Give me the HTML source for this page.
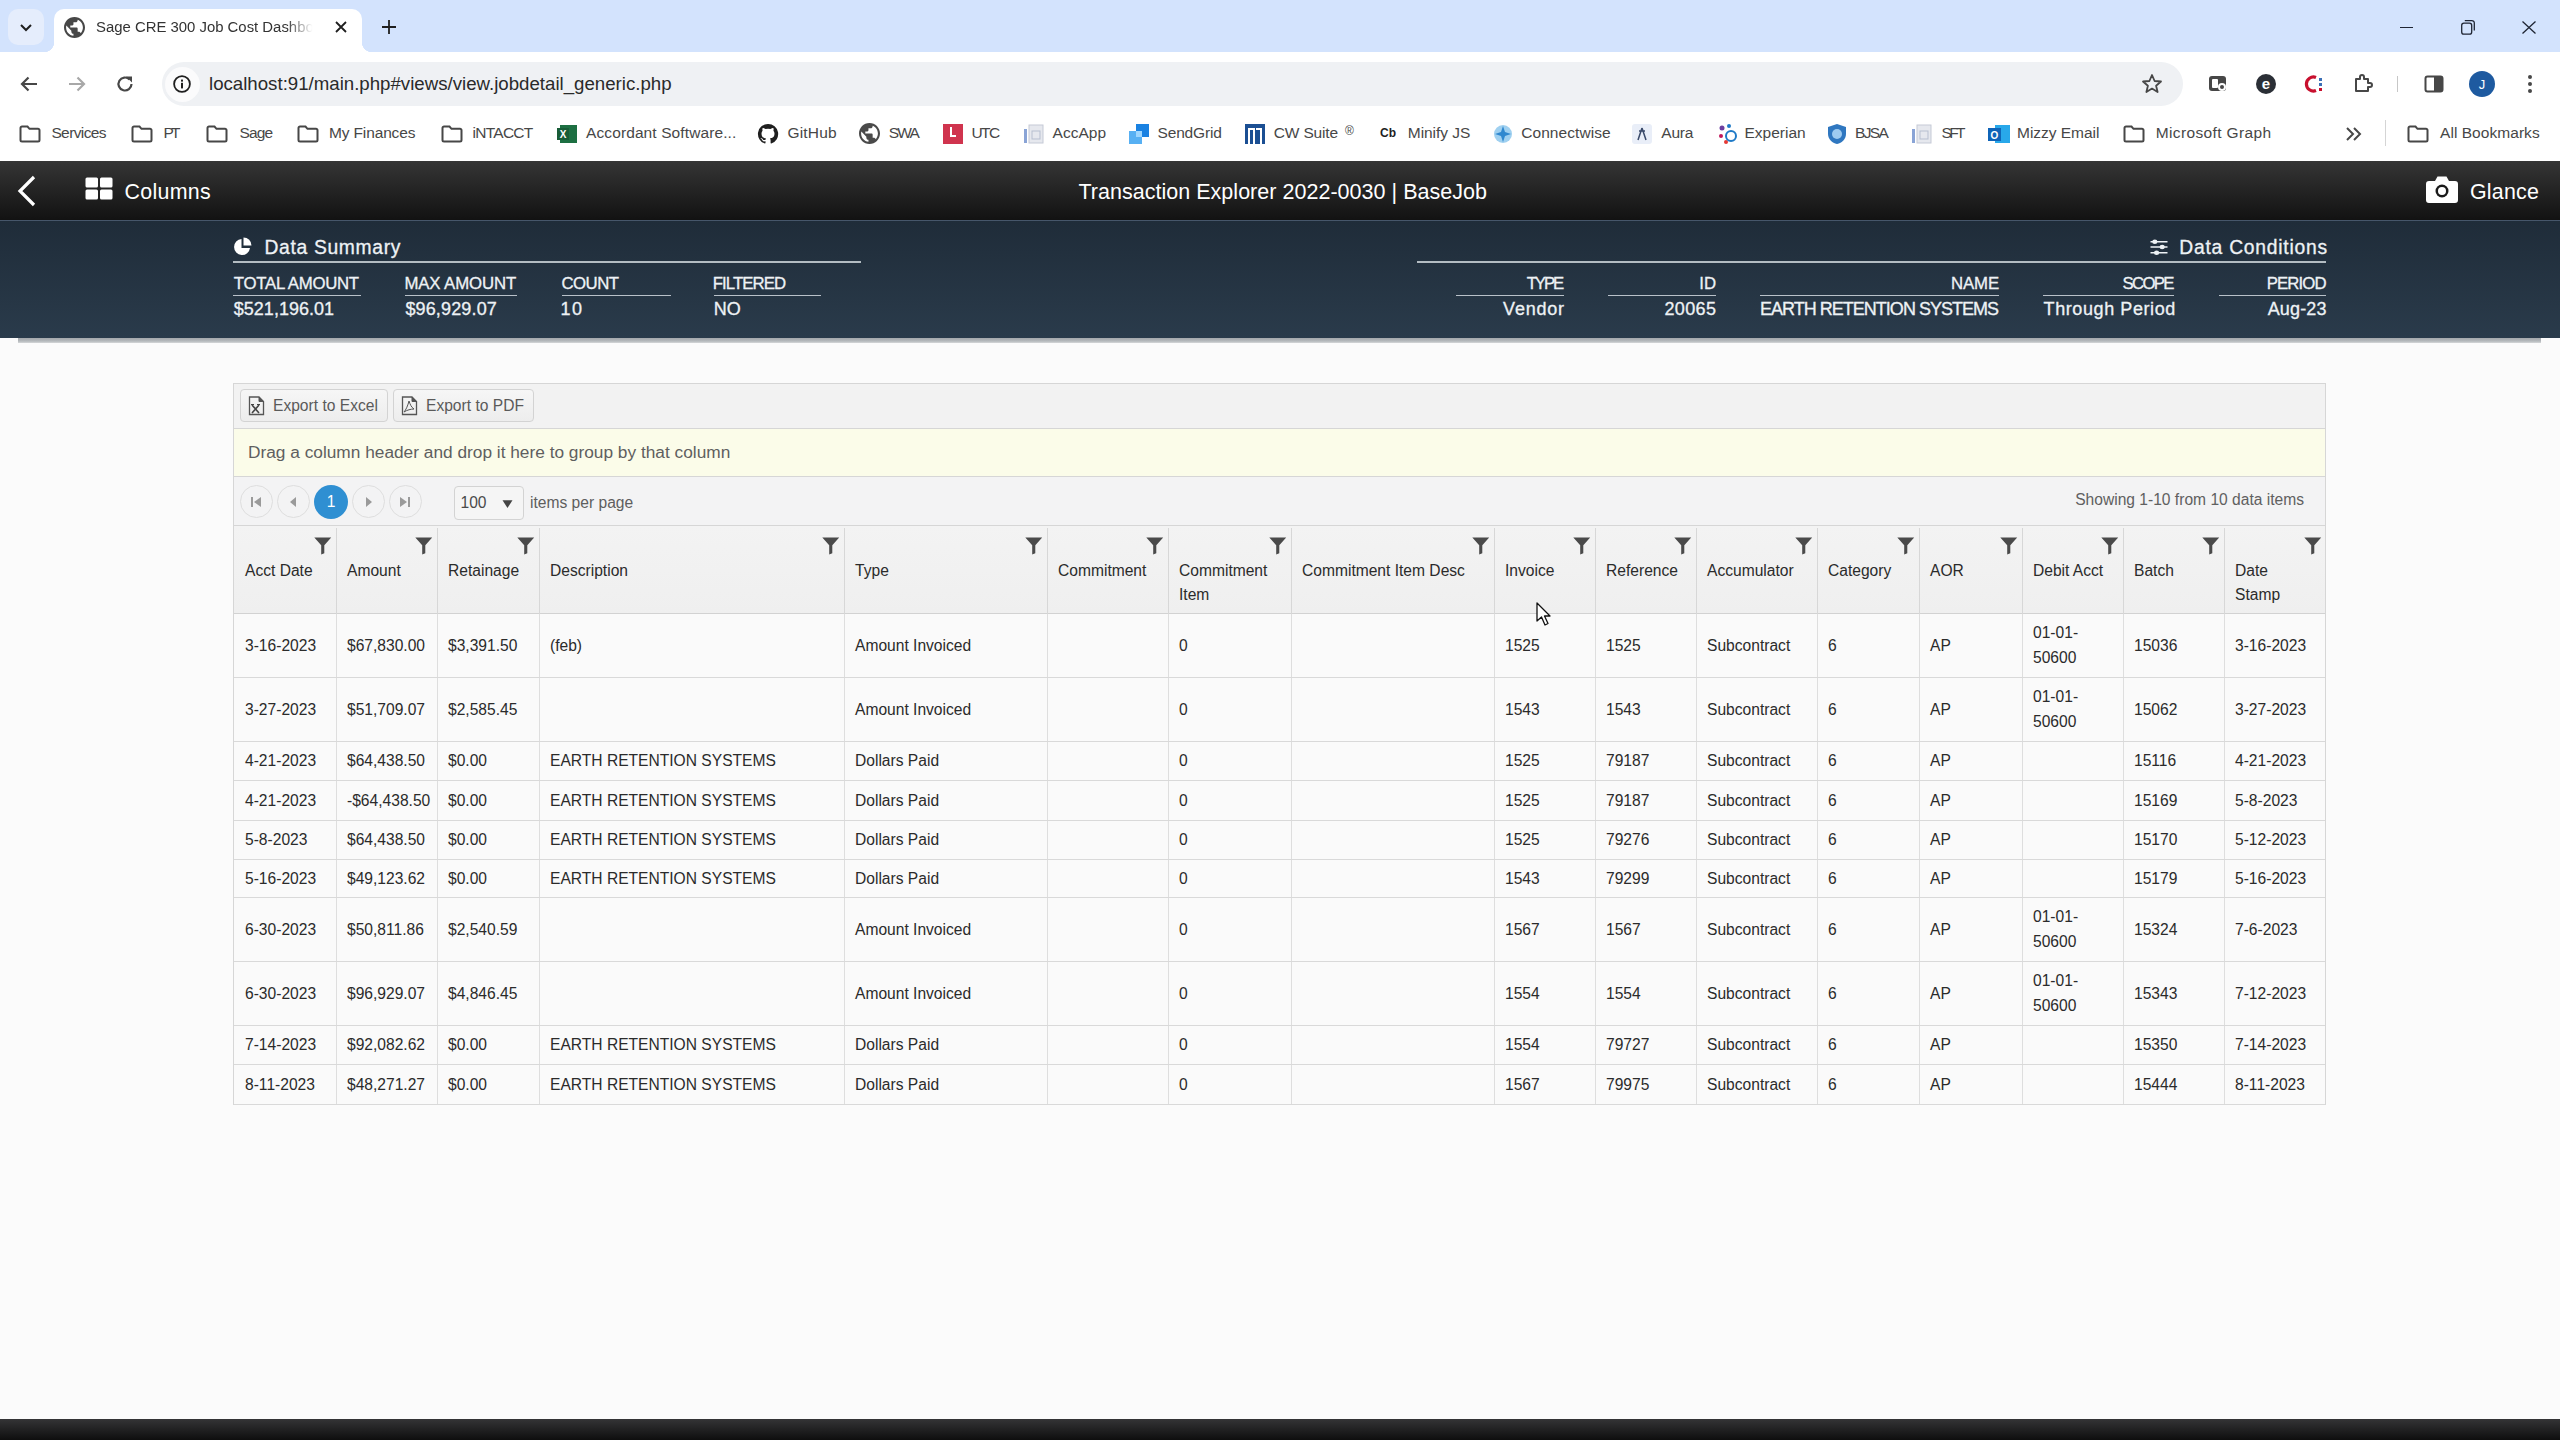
<!DOCTYPE html><html><head><meta charset="utf-8"><style>*{margin:0;padding:0;box-sizing:border-box}html,body{width:2560px;height:1440px;overflow:hidden;background:#fbfbfb;font-family:"Liberation Sans",sans-serif;position:relative}</style></head><body>
<div style="position:absolute;left:0px;top:0px;width:2560px;height:52px;background:#d3e3fd"></div>
<div style="position:absolute;left:8px;top:9px;width:36px;height:36px;background:#e5edfc;border-radius:10px"></div>
<svg style="position:absolute;left:18px;top:19px" width="16" height="16" viewBox="0 0 16 16"><path d="M3 6 L8 11 L13 6" fill="none" stroke="#1f1f1f" stroke-width="2"/></svg>
<div style="position:absolute;left:54px;top:9px;width:308px;height:43px;background:#fff;border-radius:10px 10px 0 0"></div>
<div style="position:absolute;left:44px;top:42px;width:10px;height:10px;background:radial-gradient(circle at 0 0,#d3e3fd 10px,#fff 10.5px)"></div>
<div style="position:absolute;left:362px;top:42px;width:10px;height:10px;background:radial-gradient(circle at 100% 0,#d3e3fd 10px,#fff 10.5px)"></div>
<svg style="position:absolute;left:64px;top:17px" width="21" height="21" viewBox="2 2 20 20"><path d="M12 2C6.48 2 2 6.48 2 12s4.48 10 10 10 10-4.48 10-10S17.52 2 12 2zm-1 17.93c-3.95-.49-7-3.85-7-7.93 0-.62.08-1.21.21-1.79L9 15v1c0 1.1.9 2 2 2v1.93zm6.9-2.54c-.26-.81-1-1.39-1.9-1.39h-1v-3c0-.55-.45-1-1-1H8v-2h2c.55 0 1-.45 1-1V7h2c1.1 0 2-.9 2-2v-.41c2.93 1.19 5 4.06 5 7.41 0 2.080-.8 3.97-2.1 5.39z" fill="#474747"/></svg>
<div style="position:absolute;left:96px;top:17px;width:221px;height:22px;overflow:hidden;font-size:14.9px;line-height:20px;color:#333;white-space:pre;-webkit-mask-image:linear-gradient(90deg,#000 86%,transparent 98%)">Sage CRE 300 Job Cost Dashboard</div>
<svg style="position:absolute;left:334px;top:20px" width="14" height="14" viewBox="0 0 14 14"><path d="M2 2 L12 12 M12 2 L2 12" stroke="#1f1f1f" stroke-width="1.8"/></svg>
<svg style="position:absolute;left:381px;top:19px" width="16" height="16" viewBox="0 0 16 16"><path d="M8 1 V15 M1 8 H15" stroke="#1f1f1f" stroke-width="1.8"/></svg>
<div style="position:absolute;left:2400px;top:26.6px;width:13px;height:1.3px;background:#1f2533"></div>
<svg style="position:absolute;left:2459px;top:18px" width="18" height="18" viewBox="0 0 18 18"><rect x="2.7" y="5.2" width="10" height="11" rx="2.2" fill="none" stroke="#1f2533" stroke-width="1.3"/><path d="M5.8 2.6 H12.8 A2.5 2.5 0 0 1 15.3 5.1 V12.5" fill="none" stroke="#1f2533" stroke-width="1.3"/></svg>
<svg style="position:absolute;left:2521px;top:20px" width="16" height="15" viewBox="0 0 16 15"><path d="M1.5 1.5 L14.5 13.5 M14.5 1.5 L1.5 13.5" stroke="#1f2533" stroke-width="1.3"/></svg>
<div style="position:absolute;left:0px;top:52px;width:2560px;height:56px;background:#fff"></div>
<svg style="position:absolute;left:19px;top:74px" width="20" height="20" viewBox="0 0 20 20"><path d="M18 10 H3 M9.5 3.5 L3 10 L9.5 16.5" fill="none" stroke="#474747" stroke-width="2.2"/></svg>
<svg style="position:absolute;left:67px;top:74px" width="20" height="20" viewBox="0 0 20 20"><path d="M2 10 H17 M10.5 3.5 L17 10 L10.5 16.5" fill="none" stroke="#a8a8a8" stroke-width="2.2"/></svg>
<svg style="position:absolute;left:115px;top:74px" width="20" height="20" viewBox="0 0 20 20"><path d="M16.5 10 A6.5 6.5 0 1 1 14.6 5.4" fill="none" stroke="#474747" stroke-width="2.2"/><path d="M11 2.5 H17 V8.5 Z" fill="#474747"/></svg>
<div style="position:absolute;left:162px;top:62px;width:2021px;height:44px;background:#eff1f4;border-radius:22px"></div>
<div style="position:absolute;left:165px;top:67px;width:35px;height:35px;background:#fbfbfc;border-radius:50%"></div>
<svg style="position:absolute;left:173px;top:75px" width="18" height="18" viewBox="0 0 18 18"><circle cx="9" cy="9" r="7.9" fill="none" stroke="#1f1f1f" stroke-width="1.8"/><rect x="8" y="7.8" width="2" height="5.6" fill="#1f1f1f"/><rect x="8" y="4.6" width="2" height="2" fill="#1f1f1f"/></svg>
<div style="position:absolute;top:75.20px;font-size:18.66px;line-height:18.66px;color:#2a2a2a;font-weight:normal;white-space:pre;font-family:'Liberation Sans',sans-serif;left:209px;">localhost:91/main.php#views/view.jobdetail_generic.php</div>
<svg style="position:absolute;left:2141px;top:73px" width="22" height="22" viewBox="0 0 22 22"><path d="M11 2 L13.6 8 L20 8.5 L15.1 12.7 L16.6 19 L11 15.6 L5.4 19 L6.9 12.7 L2 8.5 L8.4 8 Z" fill="none" stroke="#474747" stroke-width="1.8" stroke-linejoin="round"/></svg>
<svg style="position:absolute;left:2207px;top:73px" width="22" height="22" viewBox="0 0 22 22"><rect x="2" y="3" width="17" height="15" rx="3" fill="#474747"/><rect x="5" y="6" width="6" height="9" rx="1" fill="#fff"/><circle cx="15" cy="14" r="4" fill="#fff"/><circle cx="15" cy="14" r="2" fill="#474747"/></svg>
<svg style="position:absolute;left:2255px;top:73px" width="22" height="22" viewBox="0 0 22 22"><circle cx="11" cy="11" r="10" fill="#2b2f36"/><text x="11" y="16" font-size="15" font-weight="bold" text-anchor="middle" fill="#fff" font-family="Liberation Sans">e</text></svg>
<svg style="position:absolute;left:2303px;top:73px" width="24" height="22" viewBox="0 0 24 22"><path d="M13 4.5 A7 7 0 1 0 13 17.5" fill="none" stroke="#c8102e" stroke-width="3.2"/><rect x="16" y="5" width="3" height="3" fill="#3b6fb6"/><rect x="16" y="10" width="3" height="3" fill="#3b6fb6"/><rect x="16" y="15" width="3" height="3" fill="#c8102e"/></svg>
<svg style="position:absolute;left:2352px;top:73px" width="22" height="22" viewBox="0 0 22 22"><path d="M4 6 H8 V4 A2 2 0 0 1 12 4 V6 H16 V10 H18 A2 2 0 0 1 18 14 H16 V18 H4 Z" fill="none" stroke="#474747" stroke-width="2" stroke-linejoin="round"/></svg>
<div style="position:absolute;left:2397px;top:76px;width:1px;height:16px;background:#c7c7c7"></div>
<svg style="position:absolute;left:2423px;top:73px" width="22" height="22" viewBox="0 0 22 22"><rect x="2.5" y="3.5" width="17" height="15" rx="2" fill="none" stroke="#474747" stroke-width="2"/><rect x="11" y="4" width="8" height="14" fill="#474747"/></svg>
<svg style="position:absolute;left:2469px;top:71px" width="26" height="26" viewBox="0 0 26 26"><circle cx="13" cy="13" r="13" fill="#1e5aa0"/><text x="13" y="18" font-size="13" text-anchor="middle" fill="#fff" font-family="Liberation Sans">J</text></svg>
<svg style="position:absolute;left:2526px;top:74px" width="8" height="20" viewBox="0 0 8 20"><circle cx="4" cy="3" r="2" fill="#474747"/><circle cx="4" cy="10" r="2" fill="#474747"/><circle cx="4" cy="17" r="2" fill="#474747"/></svg>
<div style="position:absolute;left:0px;top:108px;width:2560px;height:53px;background:#fff"></div>
<svg style="position:absolute;left:19px;top:125px" width="22" height="18" viewBox="0 0 22 18"><path d="M1.5 3 A1.5 1.5 0 0 1 3 1.5 H8.5 L10.5 3.8 H19 A1.5 1.5 0 0 1 20.5 5.3 V15 A1.5 1.5 0 0 1 19 16.5 H3 A1.5 1.5 0 0 1 1.5 15 Z" fill="none" stroke="#474747" stroke-width="2"/></svg>
<div style="position:absolute;top:125.48px;font-size:15.5px;line-height:15.5px;color:#474747;font-weight:normal;white-space:pre;font-family:'Liberation Sans',sans-serif;letter-spacing:-0.612px;left:51.4px;">Services</div>
<svg style="position:absolute;left:131px;top:125px" width="22" height="18" viewBox="0 0 22 18"><path d="M1.5 3 A1.5 1.5 0 0 1 3 1.5 H8.5 L10.5 3.8 H19 A1.5 1.5 0 0 1 20.5 5.3 V15 A1.5 1.5 0 0 1 19 16.5 H3 A1.5 1.5 0 0 1 1.5 15 Z" fill="none" stroke="#474747" stroke-width="2"/></svg>
<div style="position:absolute;top:125.48px;font-size:15.5px;line-height:15.5px;color:#474747;font-weight:normal;white-space:pre;font-family:'Liberation Sans',sans-serif;letter-spacing:-2.838px;left:163.5px;">PT</div>
<svg style="position:absolute;left:206px;top:125px" width="22" height="18" viewBox="0 0 22 18"><path d="M1.5 3 A1.5 1.5 0 0 1 3 1.5 H8.5 L10.5 3.8 H19 A1.5 1.5 0 0 1 20.5 5.3 V15 A1.5 1.5 0 0 1 19 16.5 H3 A1.5 1.5 0 0 1 1.5 15 Z" fill="none" stroke="#474747" stroke-width="2"/></svg>
<div style="position:absolute;top:125.48px;font-size:15.5px;line-height:15.5px;color:#474747;font-weight:normal;white-space:pre;font-family:'Liberation Sans',sans-serif;letter-spacing:-0.893px;left:239.5px;">Sage</div>
<svg style="position:absolute;left:297px;top:125px" width="22" height="18" viewBox="0 0 22 18"><path d="M1.5 3 A1.5 1.5 0 0 1 3 1.5 H8.5 L10.5 3.8 H19 A1.5 1.5 0 0 1 20.5 5.3 V15 A1.5 1.5 0 0 1 19 16.5 H3 A1.5 1.5 0 0 1 1.5 15 Z" fill="none" stroke="#474747" stroke-width="2"/></svg>
<div style="position:absolute;top:125.48px;font-size:15.5px;line-height:15.5px;color:#474747;font-weight:normal;white-space:pre;font-family:'Liberation Sans',sans-serif;letter-spacing:-0.141px;left:329px;">My Finances</div>
<svg style="position:absolute;left:441px;top:125px" width="22" height="18" viewBox="0 0 22 18"><path d="M1.5 3 A1.5 1.5 0 0 1 3 1.5 H8.5 L10.5 3.8 H19 A1.5 1.5 0 0 1 20.5 5.3 V15 A1.5 1.5 0 0 1 19 16.5 H3 A1.5 1.5 0 0 1 1.5 15 Z" fill="none" stroke="#474747" stroke-width="2"/></svg>
<div style="position:absolute;top:125.48px;font-size:15.5px;line-height:15.5px;color:#474747;font-weight:normal;white-space:pre;font-family:'Liberation Sans',sans-serif;letter-spacing:-0.747px;left:472.6px;">iNTACCT</div>
<svg style="position:absolute;left:556px;top:124px" width="22" height="20" viewBox="0 0 22 20"><rect x="4" y="1" width="17" height="18" fill="#1d6f42"/><rect x="1" y="4" width="12" height="12" fill="#185c37"/><text x="7" y="14" font-size="10" text-anchor="middle" fill="#fff" font-weight="bold" font-family="Liberation Sans">X</text></svg>
<div style="position:absolute;top:125.48px;font-size:15.5px;line-height:15.5px;color:#474747;font-weight:normal;white-space:pre;font-family:'Liberation Sans',sans-serif;letter-spacing:0.106px;left:586px;">Accordant Software...</div>
<svg style="position:absolute;left:757px;top:123px" width="22" height="22" viewBox="0 0 22 22"><path d="M11 1 A10 10 0 0 0 7.8 20.5 C8.3 20.6 8.5 20.3 8.5 20 V18.3 C5.7 18.9 5.1 17 5.1 17 C4.6 15.8 3.9 15.5 3.9 15.5 C3 14.9 4 14.9 4 14.9 C5 15 5.5 15.9 5.5 15.9 C6.4 17.5 7.9 17 8.5 16.8 C8.6 16.1 8.9 15.7 9.1 15.5 C6.9 15.2 4.5 14.4 4.5 10.5 C4.5 9.4 4.9 8.5 5.6 7.8 C5.5 7.5 5.1 6.5 5.7 5.1 C5.7 5.1 6.6 4.8 8.5 6.1 A9.6 9.6 0 0 1 13.5 6.1 C15.4 4.8 16.3 5.1 16.3 5.1 C16.9 6.5 16.5 7.5 16.4 7.8 C17.1 8.5 17.5 9.4 17.5 10.5 C17.5 14.4 15.1 15.2 12.9 15.5 C13.3 15.8 13.6 16.4 13.6 17.3 V20 C13.6 20.3 13.8 20.6 14.3 20.5 A10 10 0 0 0 11 1 Z" fill="#1f1f1f"/></svg>
<div style="position:absolute;top:125.48px;font-size:15.5px;line-height:15.5px;color:#474747;font-weight:normal;white-space:pre;font-family:'Liberation Sans',sans-serif;letter-spacing:0.176px;left:787.5px;">GitHub</div>
<svg style="position:absolute;left:859px;top:123px" width="21" height="21" viewBox="2 2 20 20"><path d="M12 2C6.48 2 2 6.48 2 12s4.48 10 10 10 10-4.48 10-10S17.52 2 12 2zm-1 17.930c-3.95-.49-7-3.85-7-7.93 0-.62.08-1.21.21-1.79L9 15v1c0 1.1.9 2 2 2v1.93zm6.9-2.54c-.26-.81-1-1.39-1.9-1.39h-1v-3c0-.55-.45-1-1-1H8v-2h2c.55 0 1-.45 1-1V7h2c1.1 0 2-.9 2-2v-.41c2.93 1.19 5 4.06 5 7.41 0 2.08-.8 3.97-2.1 5.39z" fill="#4a4a4a"/></svg>
<div style="position:absolute;top:125.48px;font-size:15.5px;line-height:15.5px;color:#474747;font-weight:normal;white-space:pre;font-family:'Liberation Sans',sans-serif;letter-spacing:-1.821px;left:888.75px;">SWA</div>
<svg style="position:absolute;left:942px;top:123px" width="22" height="22" viewBox="0 0 22 22"><rect x="1" y="1" width="20" height="20" fill="#d0344e"/><path d="M9 4 V13 H14" fill="none" stroke="#fff" stroke-width="2"/></svg>
<div style="position:absolute;top:125.48px;font-size:15.5px;line-height:15.5px;color:#474747;font-weight:normal;white-space:pre;font-family:'Liberation Sans',sans-serif;letter-spacing:-1.581px;left:971.5px;">UTC</div>
<svg style="position:absolute;left:1023px;top:123px" width="22" height="22" viewBox="0 0 22 22"><rect x="6" y="2" width="14" height="18" fill="#e6e8ee" stroke="#c5cad6"/><rect x="1" y="6" width="3" height="14" fill="#8aa4d6"/><rect x="9" y="8" width="8" height="8" fill="none" stroke="#b7bfd0"/></svg>
<div style="position:absolute;top:125.48px;font-size:15.5px;line-height:15.5px;color:#474747;font-weight:normal;white-space:pre;font-family:'Liberation Sans',sans-serif;letter-spacing:0.041px;left:1052.5px;">AccApp</div>
<svg style="position:absolute;left:1128px;top:123px" width="22" height="22" viewBox="0 0 22 22"><rect x="8" y="1" width="13" height="13" fill="#1a82e2"/><rect x="1" y="8" width="13" height="13" fill="#57b0f3"/><rect x="8" y="8" width="6" height="6" fill="#9dd6ff"/></svg>
<div style="position:absolute;top:125.48px;font-size:15.5px;line-height:15.5px;color:#474747;font-weight:normal;white-space:pre;font-family:'Liberation Sans',sans-serif;letter-spacing:-0.159px;left:1157.5px;">SendGrid</div>
<svg style="position:absolute;left:1244px;top:123px" width="22" height="22" viewBox="0 0 22 22"><rect x="1" y="1" width="20" height="20" fill="#1b4f93"/><path d="M5 21 V6 H10 V21 M12 6 H17 V21" fill="none" stroke="#fff" stroke-width="2"/></svg>
<div style="position:absolute;top:125.48px;font-size:15.5px;line-height:15.5px;color:#474747;font-weight:normal;white-space:pre;font-family:'Liberation Sans',sans-serif;letter-spacing:-0.155px;left:1273.75px;">CW Suite</div>
<div style="position:absolute;top:125.44px;font-size:12px;line-height:12px;color:#474747;font-weight:normal;white-space:pre;font-family:'Liberation Sans',sans-serif;left:1345px;">®</div>
<div style="position:absolute;top:127.44px;font-size:12px;line-height:12px;color:#1f1f1f;font-weight:bold;white-space:pre;font-family:'Liberation Sans',sans-serif;left:1380px;">Cb</div>
<div style="position:absolute;top:125.48px;font-size:15.5px;line-height:15.5px;color:#474747;font-weight:normal;white-space:pre;font-family:'Liberation Sans',sans-serif;letter-spacing:-0.035px;left:1407.75px;">Minify JS</div>
<svg style="position:absolute;left:1493px;top:124px" width="20" height="20" viewBox="0 0 20 20"><circle cx="10" cy="10" r="9" fill="#9fd0f0"/><path d="M10 2 L12 8 L18 10 L12 12 L10 18 L8 12 L2 10 L8 8 Z" fill="#2f88cf"/></svg>
<div style="position:absolute;top:125.48px;font-size:15.5px;line-height:15.5px;color:#474747;font-weight:normal;white-space:pre;font-family:'Liberation Sans',sans-serif;letter-spacing:0.063px;left:1521.25px;">Connectwise</div>
<svg style="position:absolute;left:1631px;top:123px" width="22" height="22" viewBox="0 0 22 22"><rect x="1" y="1" width="20" height="20" rx="3" fill="#e9eef8"/><path d="M11 5 L7 17 M11 5 L15 17 M8 8 H14" fill="none" stroke="#3a4a6a" stroke-width="1.5"/></svg>
<div style="position:absolute;top:125.48px;font-size:15.5px;line-height:15.5px;color:#474747;font-weight:normal;white-space:pre;font-family:'Liberation Sans',sans-serif;letter-spacing:-0.207px;left:1661.25px;">Aura</div>
<svg style="position:absolute;left:1717px;top:123px" width="22" height="22" viewBox="0 0 22 22"><circle cx="5" cy="5" r="2.5" fill="#6d3fa0"/><circle cx="12" cy="3" r="2" fill="#1f7ac7"/><circle cx="4" cy="13" r="2" fill="#c2185b"/><circle cx="9" cy="19" r="2" fill="#e53935"/><circle cx="14" cy="13" r="5" fill="#fff" stroke="#1f7ac7" stroke-width="2"/></svg>
<div style="position:absolute;top:125.48px;font-size:15.5px;line-height:15.5px;color:#474747;font-weight:normal;white-space:pre;font-family:'Liberation Sans',sans-serif;letter-spacing:-0.008px;left:1744.5px;">Experian</div>
<svg style="position:absolute;left:1826px;top:123px" width="22" height="22" viewBox="0 0 22 22"><path d="M11 1 L20 4 V11 C20 16 16 20 11 21 C6 20 2 16 2 11 V4 Z" fill="#2f77c0"/><circle cx="11" cy="11" r="5" fill="#9ecbf0"/></svg>
<div style="position:absolute;top:125.48px;font-size:15.5px;line-height:15.5px;color:#474747;font-weight:normal;white-space:pre;font-family:'Liberation Sans',sans-serif;letter-spacing:-1.676px;left:1855px;">BJSA</div>
<svg style="position:absolute;left:1911px;top:123px" width="22" height="22" viewBox="0 0 22 22"><rect x="6" y="2" width="14" height="18" fill="#e6e8ee" stroke="#c5cad6"/><rect x="1" y="6" width="3" height="14" fill="#8aa4d6"/><rect x="9" y="8" width="8" height="8" fill="none" stroke="#b7bfd0"/></svg>
<div style="position:absolute;top:125.48px;font-size:15.5px;line-height:15.5px;color:#474747;font-weight:normal;white-space:pre;font-family:'Liberation Sans',sans-serif;letter-spacing:-2.603px;left:1941.4px;">SFT</div>
<svg style="position:absolute;left:1987px;top:122px" width="24" height="24" viewBox="0 0 24 24"><rect x="8" y="3" width="15" height="18" fill="#28a8ea"/><rect x="1" y="6" width="13" height="13" fill="#0f64b8"/><text x="7.5" y="16.5" font-size="10" text-anchor="middle" fill="#fff" font-weight="bold" font-family="Liberation Sans">O</text></svg>
<div style="position:absolute;top:125.48px;font-size:15.5px;line-height:15.5px;color:#474747;font-weight:normal;white-space:pre;font-family:'Liberation Sans',sans-serif;letter-spacing:-0.023px;left:2017px;">Mizzy Email</div>
<svg style="position:absolute;left:2123px;top:125px" width="22" height="18" viewBox="0 0 22 18"><path d="M1.5 3 A1.5 1.5 0 0 1 3 1.5 H8.5 L10.5 3.8 H19 A1.5 1.5 0 0 1 20.5 5.3 V15 A1.5 1.5 0 0 1 19 16.5 H3 A1.5 1.5 0 0 1 1.5 15 Z" fill="none" stroke="#474747" stroke-width="2"/></svg>
<div style="position:absolute;top:125.48px;font-size:15.5px;line-height:15.5px;color:#474747;font-weight:normal;white-space:pre;font-family:'Liberation Sans',sans-serif;letter-spacing:0.355px;left:2155.8px;">Microsoft Graph</div>
<svg style="position:absolute;left:2345px;top:126px" width="18" height="16" viewBox="0 0 18 16"><path d="M2 2 L8 8 L2 14 M9 2 L15 8 L9 14" fill="none" stroke="#474747" stroke-width="2"/></svg>
<div style="position:absolute;left:2385px;top:120px;width:1px;height:26px;background:#d5d5d5"></div>
<svg style="position:absolute;left:2407px;top:125px" width="22" height="18" viewBox="0 0 22 18"><path d="M1.5 3 A1.5 1.5 0 0 1 3 1.5 H8.5 L10.5 3.8 H19 A1.5 1.5 0 0 1 20.5 5.3 V15 A1.5 1.5 0 0 1 19 16.5 H3 A1.5 1.5 0 0 1 1.5 15 Z" fill="none" stroke="#474747" stroke-width="2"/></svg>
<div style="position:absolute;top:125.48px;font-size:15.5px;line-height:15.5px;color:#474747;font-weight:normal;white-space:pre;font-family:'Liberation Sans',sans-serif;letter-spacing:0.05px;left:2440px;">All Bookmarks</div>
<div style="position:absolute;left:0px;top:161px;width:2560px;height:59px;background:linear-gradient(#353535,#121212)"></div>
<svg style="position:absolute;left:15px;top:174px" width="24" height="34" viewBox="0 0 24 34"><path d="M19 3 L5 17 L19 31" fill="none" stroke="#fff" stroke-width="3.2"/></svg>
<svg style="position:absolute;left:85px;top:177px" width="28" height="23" viewBox="0 0 28 23"><rect x="0.5" y="0.5" width="12.5" height="10" rx="1.5" fill="#fff"/><rect x="15" y="0.5" width="12.5" height="10" rx="1.5" fill="#fff"/><rect x="0.5" y="12.5" width="12.5" height="10" rx="1.5" fill="#fff"/><rect x="15" y="12.5" width="12.5" height="10" rx="1.5" fill="#fff"/></svg>
<div style="position:absolute;top:181.88px;font-size:21.4px;line-height:21.4px;color:#fff;font-weight:normal;white-space:pre;font-family:'Liberation Sans',sans-serif;letter-spacing:0.299px;left:124.5px;">Columns</div>
<div style="position:absolute;top:181.60px;font-size:21.5px;line-height:21.5px;color:#fff;font-weight:normal;white-space:pre;font-family:'Liberation Sans',sans-serif;letter-spacing:0.026px;left:1078.4px;">Transaction Explorer 2022-0030 | BaseJob</div>
<svg style="position:absolute;left:2426px;top:174px" width="32" height="29" viewBox="0 0 32 29"><path d="M3 7 H9 L11.5 2.5 H20.5 L23 7 H29 A3 3 0 0 1 32 10 V26 A3 3 0 0 1 29 29 H3 A3 3 0 0 1 0 26 V10 A3 3 0 0 1 3 7 Z" fill="#fff"/><circle cx="16" cy="17" r="6.5" fill="#1a1a1a"/><circle cx="16" cy="17" r="4" fill="#fff"/></svg>
<div style="position:absolute;top:181.88px;font-size:21.4px;line-height:21.4px;color:#fff;font-weight:normal;white-space:pre;font-family:'Liberation Sans',sans-serif;letter-spacing:0.224px;left:2470px;">Glance</div>
<div style="position:absolute;left:0px;top:220px;width:2560px;height:118px;background:linear-gradient(#1f2c39,#2a3b4b);border-top:1px solid #46566a"></div>
<div style="position:absolute;left:18px;top:338px;width:2523px;height:6px;background:linear-gradient(#a4a8ac,#b4b8bb 50%,#e6e7e8)"></div>
<svg style="position:absolute;left:233px;top:237px" width="19" height="19" viewBox="0 0 19 19"><path d="M8.5 2 A8 8 0 1 0 17 11 H8.5 Z" fill="#fff"/><path d="M10.5 0.5 A8 8 0 0 1 18.5 8.5 H10.5 Z" fill="#fff"/></svg>
<div style="position:absolute;top:238.06px;font-size:19.3px;line-height:19.3px;color:#eef2f5;font-weight:normal;white-space:pre;font-family:'Liberation Sans',sans-serif;letter-spacing:0.669px;left:264.5px;-webkit-text-stroke:0.3px #eef2f5;">Data Summary</div>
<div style="position:absolute;left:233px;top:261.3px;width:628px;height:1.4px;background:#b3bcc2"></div>
<div style="position:absolute;top:275.78px;font-size:16.8px;line-height:16.8px;color:#eef2f5;font-weight:normal;white-space:pre;font-family:'Liberation Sans',sans-serif;letter-spacing:-0.278px;left:233.8px;-webkit-text-stroke:0.3px #eef2f5;">TOTAL AMOUNT</div>
<div style="position:absolute;left:233px;top:294.5px;width:128px;height:1.5px;background:#b9c1c9"></div>
<div style="position:absolute;top:300.36px;font-size:18px;line-height:18px;color:#eef2f5;font-weight:normal;white-space:pre;font-family:'Liberation Sans',sans-serif;letter-spacing:0.011px;left:233.8px;-webkit-text-stroke:0.3px #eef2f5;">$521,196.01</div>
<div style="position:absolute;top:275.78px;font-size:16.8px;line-height:16.8px;color:#eef2f5;font-weight:normal;white-space:pre;font-family:'Liberation Sans',sans-serif;letter-spacing:-0.11px;left:404.4px;-webkit-text-stroke:0.3px #eef2f5;">MAX AMOUNT</div>
<div style="position:absolute;left:405px;top:294.5px;width:112px;height:1.5px;background:#b9c1c9"></div>
<div style="position:absolute;top:300.36px;font-size:18px;line-height:18px;color:#eef2f5;font-weight:normal;white-space:pre;font-family:'Liberation Sans',sans-serif;letter-spacing:0.147px;left:405.4px;-webkit-text-stroke:0.3px #eef2f5;">$96,929.07</div>
<div style="position:absolute;top:275.78px;font-size:16.8px;line-height:16.8px;color:#eef2f5;font-weight:normal;white-space:pre;font-family:'Liberation Sans',sans-serif;letter-spacing:-0.527px;left:561.5px;-webkit-text-stroke:0.3px #eef2f5;">COUNT</div>
<div style="position:absolute;left:562px;top:294.5px;width:109px;height:1.5px;background:#b9c1c9"></div>
<div style="position:absolute;top:300.36px;font-size:18px;line-height:18px;color:#eef2f5;font-weight:normal;white-space:pre;font-family:'Liberation Sans',sans-serif;letter-spacing:1.489px;left:560.5px;-webkit-text-stroke:0.3px #eef2f5;">10</div>
<div style="position:absolute;top:275.78px;font-size:16.8px;line-height:16.8px;color:#eef2f5;font-weight:normal;white-space:pre;font-family:'Liberation Sans',sans-serif;letter-spacing:-0.951px;left:712.8px;-webkit-text-stroke:0.3px #eef2f5;">FILTERED</div>
<div style="position:absolute;left:714px;top:294.5px;width:107px;height:1.5px;background:#b9c1c9"></div>
<div style="position:absolute;top:300.36px;font-size:18px;line-height:18px;color:#eef2f5;font-weight:normal;white-space:pre;font-family:'Liberation Sans',sans-serif;left:713.8px;-webkit-text-stroke:0.3px #eef2f5;">NO</div>
<svg style="position:absolute;left:2149px;top:238px" width="20" height="18" viewBox="0 0 20 18"><path d="M1.5 3.7 H18.5 M1.5 9 H18.5 M1.5 14.7 H18.5" stroke="#eef2f5" stroke-width="1.6"/><ellipse cx="5.8" cy="3.7" rx="2.6" ry="2.2" fill="#eef2f5"/><ellipse cx="13.2" cy="9" rx="2.6" ry="2.2" fill="#eef2f5"/><ellipse cx="7.6" cy="14.7" rx="2.6" ry="2.2" fill="#eef2f5"/></svg>
<div style="position:absolute;top:238.06px;font-size:19.3px;line-height:19.3px;color:#eef2f5;font-weight:normal;white-space:pre;font-family:'Liberation Sans',sans-serif;letter-spacing:0.761px;right:232.09837500000003px;-webkit-text-stroke:0.3px #eef2f5;">Data Conditions</div>
<div style="position:absolute;left:1417px;top:261.3px;width:909px;height:1.4px;background:#b3bcc2"></div>
<div style="position:absolute;top:275.78px;font-size:16.8px;line-height:16.8px;color:#eef2f5;font-weight:normal;white-space:pre;font-family:'Liberation Sans',sans-serif;letter-spacing:-2.112px;right:997.9190373535157px;-webkit-text-stroke:0.3px #eef2f5;">TYPE</div>
<div style="position:absolute;left:1456px;top:294.5px;width:108px;height:1.5px;background:#b9c1c9"></div>
<div style="position:absolute;top:300.36px;font-size:18px;line-height:18px;color:#eef2f5;font-weight:normal;white-space:pre;font-family:'Liberation Sans',sans-serif;letter-spacing:0.769px;right:995.236859375px;-webkit-text-stroke:0.3px #eef2f5;">Vendor</div>
<div style="position:absolute;top:275.78px;font-size:16.8px;line-height:16.8px;color:#eef2f5;font-weight:normal;white-space:pre;font-family:'Liberation Sans',sans-serif;letter-spacing:0.138px;right:843.7431187744141px;-webkit-text-stroke:0.3px #eef2f5;">ID</div>
<div style="position:absolute;left:1608px;top:294.5px;width:108px;height:1.5px;background:#b9c1c9"></div>
<div style="position:absolute;top:300.36px;font-size:18px;line-height:18px;color:#eef2f5;font-weight:normal;white-space:pre;font-family:'Liberation Sans',sans-serif;letter-spacing:0.389px;right:843.6002578125001px;-webkit-text-stroke:0.3px #eef2f5;">20065</div>
<div style="position:absolute;top:275.78px;font-size:16.8px;line-height:16.8px;color:#eef2f5;font-weight:normal;white-space:pre;font-family:'Liberation Sans',sans-serif;letter-spacing:-0.097px;right:560.9040373535156px;-webkit-text-stroke:0.3px #eef2f5;">NAME</div>
<div style="position:absolute;left:1760px;top:294.5px;width:239px;height:1.5px;background:#b9c1c9"></div>
<div style="position:absolute;top:300.36px;font-size:18px;line-height:18px;color:#eef2f5;font-weight:normal;white-space:pre;font-family:'Liberation Sans',sans-serif;letter-spacing:-0.986px;right:561.9801406250001px;-webkit-text-stroke:0.3px #eef2f5;">EARTH RETENTION SYSTEMS</div>
<div style="position:absolute;top:275.78px;font-size:16.8px;line-height:16.8px;color:#eef2f5;font-weight:normal;white-space:pre;font-family:'Liberation Sans',sans-serif;letter-spacing:-1.714px;right:387.2210373535154px;-webkit-text-stroke:0.3px #eef2f5;">SCOPE</div>
<div style="position:absolute;left:2043px;top:294.5px;width:131px;height:1.5px;background:#b9c1c9"></div>
<div style="position:absolute;top:300.36px;font-size:18px;line-height:18px;color:#eef2f5;font-weight:normal;white-space:pre;font-family:'Liberation Sans',sans-serif;letter-spacing:0.587px;right:384.10225781249983px;-webkit-text-stroke:0.3px #eef2f5;">Through Period</div>
<div style="position:absolute;top:275.78px;font-size:16.8px;line-height:16.8px;color:#eef2f5;font-weight:normal;white-space:pre;font-family:'Liberation Sans',sans-serif;letter-spacing:-0.884px;right:234.26511877441408px;-webkit-text-stroke:0.3px #eef2f5;">PERIOD</div>
<div style="position:absolute;left:2219px;top:294.5px;width:107px;height:1.5px;background:#b9c1c9"></div>
<div style="position:absolute;top:300.36px;font-size:18px;line-height:18px;color:#eef2f5;font-weight:normal;white-space:pre;font-family:'Liberation Sans',sans-serif;letter-spacing:0.154px;right:233.3352578125px;-webkit-text-stroke:0.3px #eef2f5;">Aug-23</div>
<div style="position:absolute;left:0px;top:343px;width:2560px;height:1076px;background:#fbfbfb"></div>
<div style="position:absolute;left:0px;top:1419px;width:2560px;height:21px;background:linear-gradient(#343436,#0e0e0e)"></div>
<div style="position:absolute;left:233px;top:383px;width:2093px;height:722px;background:#fafafa;border:1px solid #d6d6d6"></div>
<div style="position:absolute;left:234px;top:384px;width:2091px;height:45px;background:#f2f2f2;border-bottom:1px solid #d6d6d6"></div>
<div style="position:absolute;left:240px;top:389px;width:148px;height:33px;background:linear-gradient(#f6f6f6,#ededed);border:1px solid #d3d3d3;border-radius:4px"></div>
<svg style="position:absolute;left:248px;top:396px" width="17" height="20" viewBox="0 0 17 20"><path d="M1.5 1 H11 L15.5 5.5 V18.5 H1.5 Z" fill="none" stroke="#555" stroke-width="1.3"/><path d="M11 1 V5.5 H15.5" fill="#555" stroke="#555" stroke-width="1"/><path d="M4 9 L11 17 M11 9 L4 17" stroke="#444" stroke-width="1.6"/><path d="M3 8.5 H6 M9 8.5 H12" stroke="#444" stroke-width="1"/></svg>
<div style="position:absolute;top:397.79px;font-size:15.6px;line-height:15.6px;color:#5a5a5a;font-weight:normal;white-space:pre;font-family:'Liberation Sans',sans-serif;left:273px;">Export to Excel</div>
<div style="position:absolute;left:393px;top:389px;width:141px;height:33px;background:linear-gradient(#f6f6f6,#ededed);border:1px solid #d3d3d3;border-radius:4px"></div>
<svg style="position:absolute;left:401px;top:396px" width="17" height="20" viewBox="0 0 17 20"><path d="M1.5 1 H11 L15.5 5.5 V18.5 H1.5 Z" fill="none" stroke="#555" stroke-width="1.3"/><path d="M11 1 V5.5 H15.5" fill="#555" stroke="#555" stroke-width="1"/><path d="M8 5 C7 9 5 14 3 16 C6 14 10 13 13 13 C10 11 9 8 8 5 Z" fill="none" stroke="#555" stroke-width="1"/></svg>
<div style="position:absolute;top:397.79px;font-size:15.6px;line-height:15.6px;color:#5a5a5a;font-weight:normal;white-space:pre;font-family:'Liberation Sans',sans-serif;left:426px;">Export to PDF</div>
<div style="position:absolute;left:234px;top:429px;width:2091px;height:48px;background:#fbfce9;border-bottom:1px solid #d6d6d6"></div>
<div style="position:absolute;top:443.96px;font-size:17.3px;line-height:17.3px;color:#5f5f5f;font-weight:normal;white-space:pre;font-family:'Liberation Sans',sans-serif;left:248px;">Drag a column header and drop it here to group by that column</div>
<div style="position:absolute;left:234px;top:477px;width:2091px;height:49px;background:#f3f3f4;border-bottom:1px solid #d6d6d6"></div>
<div style="position:absolute;left:240.0px;top:485px;width:33px;height:33px;border:1px solid #dedede;border-radius:50%"></div>
<div style="position:absolute;left:276.5px;top:485px;width:33px;height:33px;border:1px solid #dedede;border-radius:50%"></div>
<div style="position:absolute;left:314px;top:484.5px;width:34px;height:34px;background:#2f8fd2;border-radius:50%"></div>
<div style="position:absolute;top:494.29px;font-size:15.6px;line-height:15.6px;color:#fff;font-weight:normal;white-space:pre;font-family:'Liberation Sans',sans-serif;left:-669px;width:2000px;text-align:center;">1</div>
<div style="position:absolute;left:352.0px;top:485px;width:33px;height:33px;border:1px solid #dedede;border-radius:50%"></div>
<div style="position:absolute;left:389.0px;top:485px;width:33px;height:33px;border:1px solid #dedede;border-radius:50%"></div>
<svg style="position:absolute;left:248px;top:494px" width="16" height="16" viewBox="0 0 16 16"><rect x="3" y="3" width="2" height="10" fill="#9a9a9a"/><path d="M13 3 V13 L6 8 Z" fill="#9a9a9a"/></svg>
<svg style="position:absolute;left:285px;top:494px" width="16" height="16" viewBox="0 0 16 16"><path d="M11 3 V13 L5 8 Z" fill="#9a9a9a"/></svg>
<svg style="position:absolute;left:360px;top:494px" width="16" height="16" viewBox="0 0 16 16"><path d="M6 3 V13 L12 8 Z" fill="#9a9a9a"/></svg>
<svg style="position:absolute;left:397px;top:494px" width="16" height="16" viewBox="0 0 16 16"><rect x="11" y="3" width="2" height="10" fill="#9a9a9a"/><path d="M3 3 V13 L10 8 Z" fill="#9a9a9a"/></svg>
<div style="position:absolute;left:453.5px;top:485.5px;width:70px;height:34px;background:#f5f5f5;border:1px solid #d3d3d3;border-radius:4px"></div>
<div style="position:absolute;top:495.09px;font-size:15.6px;line-height:15.6px;color:#4a4a4a;font-weight:normal;white-space:pre;font-family:'Liberation Sans',sans-serif;left:460.5px;">100</div>
<svg style="position:absolute;left:501px;top:497px" width="13" height="12" viewBox="0 0 13 12"><path d="M1.5 3.2 H11.5 L6.5 11 Z" fill="#444"/></svg>
<div style="position:absolute;top:494.59px;font-size:15.6px;line-height:15.6px;color:#5e5e5e;font-weight:normal;white-space:pre;font-family:'Liberation Sans',sans-serif;left:530px;">items per page</div>
<div style="position:absolute;top:491.79px;font-size:15.6px;line-height:15.6px;color:#606060;font-weight:normal;white-space:pre;font-family:'Liberation Sans',sans-serif;right:256px;">Showing 1-10 from 10 data items</div>
<div style="position:absolute;left:234px;top:526px;width:2091px;height:88px;background:linear-gradient(#f3f3f3,#efefef);border-bottom:1px solid #d2d2d2"></div>
<div style="position:absolute;top:563.29px;font-size:15.6px;line-height:15.6px;color:#2b2b2b;font-weight:normal;white-space:pre;font-family:'Liberation Sans',sans-serif;left:245px;">Acct Date</div>
<svg style="position:absolute;left:314px;top:537px" width="18" height="18" viewBox="0 0 18 18"><path d="M0.3 0.5 H17.2 L10.3 8.2 V16.3 L7.2 17.5 V8.2 Z" fill="#4a4a4a"/></svg>
<div style="position:absolute;left:336px;top:528px;width:1px;height:86px;background:#d7d7d7"></div>
<div style="position:absolute;top:563.29px;font-size:15.6px;line-height:15.6px;color:#2b2b2b;font-weight:normal;white-space:pre;font-family:'Liberation Sans',sans-serif;left:347px;">Amount</div>
<svg style="position:absolute;left:415px;top:537px" width="18" height="18" viewBox="0 0 18 18"><path d="M0.3 0.5 H17.2 L10.3 8.2 V16.3 L7.2 17.5 V8.2 Z" fill="#4a4a4a"/></svg>
<div style="position:absolute;left:437px;top:528px;width:1px;height:86px;background:#d7d7d7"></div>
<div style="position:absolute;top:563.29px;font-size:15.6px;line-height:15.6px;color:#2b2b2b;font-weight:normal;white-space:pre;font-family:'Liberation Sans',sans-serif;left:448px;">Retainage</div>
<svg style="position:absolute;left:517px;top:537px" width="18" height="18" viewBox="0 0 18 18"><path d="M0.3 0.5 H17.2 L10.3 8.2 V16.3 L7.2 17.5 V8.2 Z" fill="#4a4a4a"/></svg>
<div style="position:absolute;left:539px;top:528px;width:1px;height:86px;background:#d7d7d7"></div>
<div style="position:absolute;top:563.29px;font-size:15.6px;line-height:15.6px;color:#2b2b2b;font-weight:normal;white-space:pre;font-family:'Liberation Sans',sans-serif;left:550px;">Description</div>
<svg style="position:absolute;left:822px;top:537px" width="18" height="18" viewBox="0 0 18 18"><path d="M0.3 0.5 H17.2 L10.3 8.2 V16.3 L7.2 17.5 V8.2 Z" fill="#4a4a4a"/></svg>
<div style="position:absolute;left:844px;top:528px;width:1px;height:86px;background:#d7d7d7"></div>
<div style="position:absolute;top:563.29px;font-size:15.6px;line-height:15.6px;color:#2b2b2b;font-weight:normal;white-space:pre;font-family:'Liberation Sans',sans-serif;left:855px;">Type</div>
<svg style="position:absolute;left:1025px;top:537px" width="18" height="18" viewBox="0 0 18 18"><path d="M0.3 0.5 H17.2 L10.3 8.2 V16.3 L7.2 17.5 V8.2 Z" fill="#4a4a4a"/></svg>
<div style="position:absolute;left:1047px;top:528px;width:1px;height:86px;background:#d7d7d7"></div>
<div style="position:absolute;top:563.29px;font-size:15.6px;line-height:15.6px;color:#2b2b2b;font-weight:normal;white-space:pre;font-family:'Liberation Sans',sans-serif;left:1058px;">Commitment</div>
<svg style="position:absolute;left:1146px;top:537px" width="18" height="18" viewBox="0 0 18 18"><path d="M0.3 0.5 H17.2 L10.3 8.2 V16.3 L7.2 17.5 V8.2 Z" fill="#4a4a4a"/></svg>
<div style="position:absolute;left:1168px;top:528px;width:1px;height:86px;background:#d7d7d7"></div>
<div style="position:absolute;top:563.29px;font-size:15.6px;line-height:15.6px;color:#2b2b2b;font-weight:normal;white-space:pre;font-family:'Liberation Sans',sans-serif;left:1179px;">Commitment</div>
<div style="position:absolute;top:587.29px;font-size:15.6px;line-height:15.6px;color:#2b2b2b;font-weight:normal;white-space:pre;font-family:'Liberation Sans',sans-serif;left:1179px;">Item</div>
<svg style="position:absolute;left:1269px;top:537px" width="18" height="18" viewBox="0 0 18 18"><path d="M0.3 0.5 H17.2 L10.3 8.2 V16.3 L7.2 17.5 V8.2 Z" fill="#4a4a4a"/></svg>
<div style="position:absolute;left:1291px;top:528px;width:1px;height:86px;background:#d7d7d7"></div>
<div style="position:absolute;top:563.29px;font-size:15.6px;line-height:15.6px;color:#2b2b2b;font-weight:normal;white-space:pre;font-family:'Liberation Sans',sans-serif;left:1302px;">Commitment Item Desc</div>
<svg style="position:absolute;left:1472px;top:537px" width="18" height="18" viewBox="0 0 18 18"><path d="M0.3 0.5 H17.2 L10.3 8.2 V16.3 L7.2 17.5 V8.2 Z" fill="#4a4a4a"/></svg>
<div style="position:absolute;left:1494px;top:528px;width:1px;height:86px;background:#d7d7d7"></div>
<div style="position:absolute;top:563.29px;font-size:15.6px;line-height:15.6px;color:#2b2b2b;font-weight:normal;white-space:pre;font-family:'Liberation Sans',sans-serif;left:1505px;">Invoice</div>
<svg style="position:absolute;left:1573px;top:537px" width="18" height="18" viewBox="0 0 18 18"><path d="M0.3 0.5 H17.2 L10.3 8.2 V16.3 L7.2 17.5 V8.2 Z" fill="#4a4a4a"/></svg>
<div style="position:absolute;left:1595px;top:528px;width:1px;height:86px;background:#d7d7d7"></div>
<div style="position:absolute;top:563.29px;font-size:15.6px;line-height:15.6px;color:#2b2b2b;font-weight:normal;white-space:pre;font-family:'Liberation Sans',sans-serif;left:1606px;">Reference</div>
<svg style="position:absolute;left:1674px;top:537px" width="18" height="18" viewBox="0 0 18 18"><path d="M0.3 0.5 H17.2 L10.3 8.2 V16.3 L7.2 17.5 V8.2 Z" fill="#4a4a4a"/></svg>
<div style="position:absolute;left:1696px;top:528px;width:1px;height:86px;background:#d7d7d7"></div>
<div style="position:absolute;top:563.29px;font-size:15.6px;line-height:15.6px;color:#2b2b2b;font-weight:normal;white-space:pre;font-family:'Liberation Sans',sans-serif;left:1707px;">Accumulator</div>
<svg style="position:absolute;left:1795px;top:537px" width="18" height="18" viewBox="0 0 18 18"><path d="M0.3 0.5 H17.2 L10.3 8.2 V16.3 L7.2 17.5 V8.2 Z" fill="#4a4a4a"/></svg>
<div style="position:absolute;left:1817px;top:528px;width:1px;height:86px;background:#d7d7d7"></div>
<div style="position:absolute;top:563.29px;font-size:15.6px;line-height:15.6px;color:#2b2b2b;font-weight:normal;white-space:pre;font-family:'Liberation Sans',sans-serif;left:1828px;">Category</div>
<svg style="position:absolute;left:1897px;top:537px" width="18" height="18" viewBox="0 0 18 18"><path d="M0.3 0.5 H17.2 L10.3 8.2 V16.3 L7.2 17.5 V8.2 Z" fill="#4a4a4a"/></svg>
<div style="position:absolute;left:1919px;top:528px;width:1px;height:86px;background:#d7d7d7"></div>
<div style="position:absolute;top:563.29px;font-size:15.6px;line-height:15.6px;color:#2b2b2b;font-weight:normal;white-space:pre;font-family:'Liberation Sans',sans-serif;left:1930px;">AOR</div>
<svg style="position:absolute;left:2000px;top:537px" width="18" height="18" viewBox="0 0 18 18"><path d="M0.3 0.5 H17.2 L10.3 8.2 V16.3 L7.2 17.5 V8.2 Z" fill="#4a4a4a"/></svg>
<div style="position:absolute;left:2022px;top:528px;width:1px;height:86px;background:#d7d7d7"></div>
<div style="position:absolute;top:563.29px;font-size:15.6px;line-height:15.6px;color:#2b2b2b;font-weight:normal;white-space:pre;font-family:'Liberation Sans',sans-serif;left:2033px;">Debit Acct</div>
<svg style="position:absolute;left:2101px;top:537px" width="18" height="18" viewBox="0 0 18 18"><path d="M0.3 0.5 H17.2 L10.3 8.2 V16.3 L7.2 17.5 V8.2 Z" fill="#4a4a4a"/></svg>
<div style="position:absolute;left:2123px;top:528px;width:1px;height:86px;background:#d7d7d7"></div>
<div style="position:absolute;top:563.29px;font-size:15.6px;line-height:15.6px;color:#2b2b2b;font-weight:normal;white-space:pre;font-family:'Liberation Sans',sans-serif;left:2134px;">Batch</div>
<svg style="position:absolute;left:2202px;top:537px" width="18" height="18" viewBox="0 0 18 18"><path d="M0.3 0.5 H17.2 L10.3 8.2 V16.3 L7.2 17.5 V8.2 Z" fill="#4a4a4a"/></svg>
<div style="position:absolute;left:2224px;top:528px;width:1px;height:86px;background:#d7d7d7"></div>
<div style="position:absolute;top:563.29px;font-size:15.6px;line-height:15.6px;color:#2b2b2b;font-weight:normal;white-space:pre;font-family:'Liberation Sans',sans-serif;left:2235px;">Date</div>
<div style="position:absolute;top:587.29px;font-size:15.6px;line-height:15.6px;color:#2b2b2b;font-weight:normal;white-space:pre;font-family:'Liberation Sans',sans-serif;left:2235px;">Stamp</div>
<svg style="position:absolute;left:2304px;top:537px" width="18" height="18" viewBox="0 0 18 18"><path d="M0.3 0.5 H17.2 L10.3 8.2 V16.3 L7.2 17.5 V8.2 Z" fill="#4a4a4a"/></svg>
<div style="position:absolute;left:336px;top:614px;width:1px;height:490px;background:#dedede"></div>
<div style="position:absolute;left:437px;top:614px;width:1px;height:490px;background:#dedede"></div>
<div style="position:absolute;left:539px;top:614px;width:1px;height:490px;background:#dedede"></div>
<div style="position:absolute;left:844px;top:614px;width:1px;height:490px;background:#dedede"></div>
<div style="position:absolute;left:1047px;top:614px;width:1px;height:490px;background:#dedede"></div>
<div style="position:absolute;left:1168px;top:614px;width:1px;height:490px;background:#dedede"></div>
<div style="position:absolute;left:1291px;top:614px;width:1px;height:490px;background:#dedede"></div>
<div style="position:absolute;left:1494px;top:614px;width:1px;height:490px;background:#dedede"></div>
<div style="position:absolute;left:1595px;top:614px;width:1px;height:490px;background:#dedede"></div>
<div style="position:absolute;left:1696px;top:614px;width:1px;height:490px;background:#dedede"></div>
<div style="position:absolute;left:1817px;top:614px;width:1px;height:490px;background:#dedede"></div>
<div style="position:absolute;left:1919px;top:614px;width:1px;height:490px;background:#dedede"></div>
<div style="position:absolute;left:2022px;top:614px;width:1px;height:490px;background:#dedede"></div>
<div style="position:absolute;left:2123px;top:614px;width:1px;height:490px;background:#dedede"></div>
<div style="position:absolute;left:2224px;top:614px;width:1px;height:490px;background:#dedede"></div>
<div style="position:absolute;left:234px;top:677px;width:2091px;height:1px;background:#d9d9d9"></div>
<div style="position:absolute;top:637.89px;font-size:15.6px;line-height:15.6px;color:#2b2b2b;font-weight:normal;white-space:pre;font-family:'Liberation Sans',sans-serif;left:245px;">3-16-2023</div>
<div style="position:absolute;top:637.89px;font-size:15.6px;line-height:15.6px;color:#2b2b2b;font-weight:normal;white-space:pre;font-family:'Liberation Sans',sans-serif;left:347px;">$67,830.00</div>
<div style="position:absolute;top:637.89px;font-size:15.6px;line-height:15.6px;color:#2b2b2b;font-weight:normal;white-space:pre;font-family:'Liberation Sans',sans-serif;left:448px;">$3,391.50</div>
<div style="position:absolute;top:637.89px;font-size:15.6px;line-height:15.6px;color:#2b2b2b;font-weight:normal;white-space:pre;font-family:'Liberation Sans',sans-serif;left:550px;">(feb)</div>
<div style="position:absolute;top:637.89px;font-size:15.6px;line-height:15.6px;color:#2b2b2b;font-weight:normal;white-space:pre;font-family:'Liberation Sans',sans-serif;left:855px;">Amount Invoiced</div>
<div style="position:absolute;top:637.89px;font-size:15.6px;line-height:15.6px;color:#2b2b2b;font-weight:normal;white-space:pre;font-family:'Liberation Sans',sans-serif;left:1179px;">0</div>
<div style="position:absolute;top:637.89px;font-size:15.6px;line-height:15.6px;color:#2b2b2b;font-weight:normal;white-space:pre;font-family:'Liberation Sans',sans-serif;left:1505px;">1525</div>
<div style="position:absolute;top:637.89px;font-size:15.6px;line-height:15.6px;color:#2b2b2b;font-weight:normal;white-space:pre;font-family:'Liberation Sans',sans-serif;left:1606px;">1525</div>
<div style="position:absolute;top:637.89px;font-size:15.6px;line-height:15.6px;color:#2b2b2b;font-weight:normal;white-space:pre;font-family:'Liberation Sans',sans-serif;left:1707px;">Subcontract</div>
<div style="position:absolute;top:637.89px;font-size:15.6px;line-height:15.6px;color:#2b2b2b;font-weight:normal;white-space:pre;font-family:'Liberation Sans',sans-serif;left:1828px;">6</div>
<div style="position:absolute;top:637.89px;font-size:15.6px;line-height:15.6px;color:#2b2b2b;font-weight:normal;white-space:pre;font-family:'Liberation Sans',sans-serif;left:1930px;">AP</div>
<div style="position:absolute;top:625.39px;font-size:15.6px;line-height:15.6px;color:#2b2b2b;font-weight:normal;white-space:pre;font-family:'Liberation Sans',sans-serif;left:2033px;">01-01-</div>
<div style="position:absolute;top:650.39px;font-size:15.6px;line-height:15.6px;color:#2b2b2b;font-weight:normal;white-space:pre;font-family:'Liberation Sans',sans-serif;left:2033px;">50600</div>
<div style="position:absolute;top:637.89px;font-size:15.6px;line-height:15.6px;color:#2b2b2b;font-weight:normal;white-space:pre;font-family:'Liberation Sans',sans-serif;left:2134px;">15036</div>
<div style="position:absolute;top:637.89px;font-size:15.6px;line-height:15.6px;color:#2b2b2b;font-weight:normal;white-space:pre;font-family:'Liberation Sans',sans-serif;left:2235px;">3-16-2023</div>
<div style="position:absolute;left:234px;top:741px;width:2091px;height:1px;background:#d9d9d9"></div>
<div style="position:absolute;top:701.89px;font-size:15.6px;line-height:15.6px;color:#2b2b2b;font-weight:normal;white-space:pre;font-family:'Liberation Sans',sans-serif;left:245px;">3-27-2023</div>
<div style="position:absolute;top:701.89px;font-size:15.6px;line-height:15.6px;color:#2b2b2b;font-weight:normal;white-space:pre;font-family:'Liberation Sans',sans-serif;left:347px;">$51,709.07</div>
<div style="position:absolute;top:701.89px;font-size:15.6px;line-height:15.6px;color:#2b2b2b;font-weight:normal;white-space:pre;font-family:'Liberation Sans',sans-serif;left:448px;">$2,585.45</div>
<div style="position:absolute;top:701.89px;font-size:15.6px;line-height:15.6px;color:#2b2b2b;font-weight:normal;white-space:pre;font-family:'Liberation Sans',sans-serif;left:855px;">Amount Invoiced</div>
<div style="position:absolute;top:701.89px;font-size:15.6px;line-height:15.6px;color:#2b2b2b;font-weight:normal;white-space:pre;font-family:'Liberation Sans',sans-serif;left:1179px;">0</div>
<div style="position:absolute;top:701.89px;font-size:15.6px;line-height:15.6px;color:#2b2b2b;font-weight:normal;white-space:pre;font-family:'Liberation Sans',sans-serif;left:1505px;">1543</div>
<div style="position:absolute;top:701.89px;font-size:15.6px;line-height:15.6px;color:#2b2b2b;font-weight:normal;white-space:pre;font-family:'Liberation Sans',sans-serif;left:1606px;">1543</div>
<div style="position:absolute;top:701.89px;font-size:15.6px;line-height:15.6px;color:#2b2b2b;font-weight:normal;white-space:pre;font-family:'Liberation Sans',sans-serif;left:1707px;">Subcontract</div>
<div style="position:absolute;top:701.89px;font-size:15.6px;line-height:15.6px;color:#2b2b2b;font-weight:normal;white-space:pre;font-family:'Liberation Sans',sans-serif;left:1828px;">6</div>
<div style="position:absolute;top:701.89px;font-size:15.6px;line-height:15.6px;color:#2b2b2b;font-weight:normal;white-space:pre;font-family:'Liberation Sans',sans-serif;left:1930px;">AP</div>
<div style="position:absolute;top:689.39px;font-size:15.6px;line-height:15.6px;color:#2b2b2b;font-weight:normal;white-space:pre;font-family:'Liberation Sans',sans-serif;left:2033px;">01-01-</div>
<div style="position:absolute;top:714.39px;font-size:15.6px;line-height:15.6px;color:#2b2b2b;font-weight:normal;white-space:pre;font-family:'Liberation Sans',sans-serif;left:2033px;">50600</div>
<div style="position:absolute;top:701.89px;font-size:15.6px;line-height:15.6px;color:#2b2b2b;font-weight:normal;white-space:pre;font-family:'Liberation Sans',sans-serif;left:2134px;">15062</div>
<div style="position:absolute;top:701.89px;font-size:15.6px;line-height:15.6px;color:#2b2b2b;font-weight:normal;white-space:pre;font-family:'Liberation Sans',sans-serif;left:2235px;">3-27-2023</div>
<div style="position:absolute;left:234px;top:780px;width:2091px;height:1px;background:#d9d9d9"></div>
<div style="position:absolute;top:753.39px;font-size:15.6px;line-height:15.6px;color:#2b2b2b;font-weight:normal;white-space:pre;font-family:'Liberation Sans',sans-serif;left:245px;">4-21-2023</div>
<div style="position:absolute;top:753.39px;font-size:15.6px;line-height:15.6px;color:#2b2b2b;font-weight:normal;white-space:pre;font-family:'Liberation Sans',sans-serif;left:347px;">$64,438.50</div>
<div style="position:absolute;top:753.39px;font-size:15.6px;line-height:15.6px;color:#2b2b2b;font-weight:normal;white-space:pre;font-family:'Liberation Sans',sans-serif;left:448px;">$0.00</div>
<div style="position:absolute;top:753.39px;font-size:15.6px;line-height:15.6px;color:#2b2b2b;font-weight:normal;white-space:pre;font-family:'Liberation Sans',sans-serif;left:550px;">EARTH RETENTION SYSTEMS</div>
<div style="position:absolute;top:753.39px;font-size:15.6px;line-height:15.6px;color:#2b2b2b;font-weight:normal;white-space:pre;font-family:'Liberation Sans',sans-serif;left:855px;">Dollars Paid</div>
<div style="position:absolute;top:753.39px;font-size:15.6px;line-height:15.6px;color:#2b2b2b;font-weight:normal;white-space:pre;font-family:'Liberation Sans',sans-serif;left:1179px;">0</div>
<div style="position:absolute;top:753.39px;font-size:15.6px;line-height:15.6px;color:#2b2b2b;font-weight:normal;white-space:pre;font-family:'Liberation Sans',sans-serif;left:1505px;">1525</div>
<div style="position:absolute;top:753.39px;font-size:15.6px;line-height:15.6px;color:#2b2b2b;font-weight:normal;white-space:pre;font-family:'Liberation Sans',sans-serif;left:1606px;">79187</div>
<div style="position:absolute;top:753.39px;font-size:15.6px;line-height:15.6px;color:#2b2b2b;font-weight:normal;white-space:pre;font-family:'Liberation Sans',sans-serif;left:1707px;">Subcontract</div>
<div style="position:absolute;top:753.39px;font-size:15.6px;line-height:15.6px;color:#2b2b2b;font-weight:normal;white-space:pre;font-family:'Liberation Sans',sans-serif;left:1828px;">6</div>
<div style="position:absolute;top:753.39px;font-size:15.6px;line-height:15.6px;color:#2b2b2b;font-weight:normal;white-space:pre;font-family:'Liberation Sans',sans-serif;left:1930px;">AP</div>
<div style="position:absolute;top:753.39px;font-size:15.6px;line-height:15.6px;color:#2b2b2b;font-weight:normal;white-space:pre;font-family:'Liberation Sans',sans-serif;left:2134px;">15116</div>
<div style="position:absolute;top:753.39px;font-size:15.6px;line-height:15.6px;color:#2b2b2b;font-weight:normal;white-space:pre;font-family:'Liberation Sans',sans-serif;left:2235px;">4-21-2023</div>
<div style="position:absolute;left:234px;top:820px;width:2091px;height:1px;background:#d9d9d9"></div>
<div style="position:absolute;top:792.89px;font-size:15.6px;line-height:15.6px;color:#2b2b2b;font-weight:normal;white-space:pre;font-family:'Liberation Sans',sans-serif;left:245px;">4-21-2023</div>
<div style="position:absolute;top:792.89px;font-size:15.6px;line-height:15.6px;color:#2b2b2b;font-weight:normal;white-space:pre;font-family:'Liberation Sans',sans-serif;left:347px;">-$64,438.50</div>
<div style="position:absolute;top:792.89px;font-size:15.6px;line-height:15.6px;color:#2b2b2b;font-weight:normal;white-space:pre;font-family:'Liberation Sans',sans-serif;left:448px;">$0.00</div>
<div style="position:absolute;top:792.89px;font-size:15.6px;line-height:15.6px;color:#2b2b2b;font-weight:normal;white-space:pre;font-family:'Liberation Sans',sans-serif;left:550px;">EARTH RETENTION SYSTEMS</div>
<div style="position:absolute;top:792.89px;font-size:15.6px;line-height:15.6px;color:#2b2b2b;font-weight:normal;white-space:pre;font-family:'Liberation Sans',sans-serif;left:855px;">Dollars Paid</div>
<div style="position:absolute;top:792.89px;font-size:15.6px;line-height:15.6px;color:#2b2b2b;font-weight:normal;white-space:pre;font-family:'Liberation Sans',sans-serif;left:1179px;">0</div>
<div style="position:absolute;top:792.89px;font-size:15.6px;line-height:15.6px;color:#2b2b2b;font-weight:normal;white-space:pre;font-family:'Liberation Sans',sans-serif;left:1505px;">1525</div>
<div style="position:absolute;top:792.89px;font-size:15.6px;line-height:15.6px;color:#2b2b2b;font-weight:normal;white-space:pre;font-family:'Liberation Sans',sans-serif;left:1606px;">79187</div>
<div style="position:absolute;top:792.89px;font-size:15.6px;line-height:15.6px;color:#2b2b2b;font-weight:normal;white-space:pre;font-family:'Liberation Sans',sans-serif;left:1707px;">Subcontract</div>
<div style="position:absolute;top:792.89px;font-size:15.6px;line-height:15.6px;color:#2b2b2b;font-weight:normal;white-space:pre;font-family:'Liberation Sans',sans-serif;left:1828px;">6</div>
<div style="position:absolute;top:792.89px;font-size:15.6px;line-height:15.6px;color:#2b2b2b;font-weight:normal;white-space:pre;font-family:'Liberation Sans',sans-serif;left:1930px;">AP</div>
<div style="position:absolute;top:792.89px;font-size:15.6px;line-height:15.6px;color:#2b2b2b;font-weight:normal;white-space:pre;font-family:'Liberation Sans',sans-serif;left:2134px;">15169</div>
<div style="position:absolute;top:792.89px;font-size:15.6px;line-height:15.6px;color:#2b2b2b;font-weight:normal;white-space:pre;font-family:'Liberation Sans',sans-serif;left:2235px;">5-8-2023</div>
<div style="position:absolute;left:234px;top:859px;width:2091px;height:1px;background:#d9d9d9"></div>
<div style="position:absolute;top:832.39px;font-size:15.6px;line-height:15.6px;color:#2b2b2b;font-weight:normal;white-space:pre;font-family:'Liberation Sans',sans-serif;left:245px;">5-8-2023</div>
<div style="position:absolute;top:832.39px;font-size:15.6px;line-height:15.6px;color:#2b2b2b;font-weight:normal;white-space:pre;font-family:'Liberation Sans',sans-serif;left:347px;">$64,438.50</div>
<div style="position:absolute;top:832.39px;font-size:15.6px;line-height:15.6px;color:#2b2b2b;font-weight:normal;white-space:pre;font-family:'Liberation Sans',sans-serif;left:448px;">$0.00</div>
<div style="position:absolute;top:832.39px;font-size:15.6px;line-height:15.6px;color:#2b2b2b;font-weight:normal;white-space:pre;font-family:'Liberation Sans',sans-serif;left:550px;">EARTH RETENTION SYSTEMS</div>
<div style="position:absolute;top:832.39px;font-size:15.6px;line-height:15.6px;color:#2b2b2b;font-weight:normal;white-space:pre;font-family:'Liberation Sans',sans-serif;left:855px;">Dollars Paid</div>
<div style="position:absolute;top:832.39px;font-size:15.6px;line-height:15.6px;color:#2b2b2b;font-weight:normal;white-space:pre;font-family:'Liberation Sans',sans-serif;left:1179px;">0</div>
<div style="position:absolute;top:832.39px;font-size:15.6px;line-height:15.6px;color:#2b2b2b;font-weight:normal;white-space:pre;font-family:'Liberation Sans',sans-serif;left:1505px;">1525</div>
<div style="position:absolute;top:832.39px;font-size:15.6px;line-height:15.6px;color:#2b2b2b;font-weight:normal;white-space:pre;font-family:'Liberation Sans',sans-serif;left:1606px;">79276</div>
<div style="position:absolute;top:832.39px;font-size:15.6px;line-height:15.6px;color:#2b2b2b;font-weight:normal;white-space:pre;font-family:'Liberation Sans',sans-serif;left:1707px;">Subcontract</div>
<div style="position:absolute;top:832.39px;font-size:15.6px;line-height:15.6px;color:#2b2b2b;font-weight:normal;white-space:pre;font-family:'Liberation Sans',sans-serif;left:1828px;">6</div>
<div style="position:absolute;top:832.39px;font-size:15.6px;line-height:15.6px;color:#2b2b2b;font-weight:normal;white-space:pre;font-family:'Liberation Sans',sans-serif;left:1930px;">AP</div>
<div style="position:absolute;top:832.39px;font-size:15.6px;line-height:15.6px;color:#2b2b2b;font-weight:normal;white-space:pre;font-family:'Liberation Sans',sans-serif;left:2134px;">15170</div>
<div style="position:absolute;top:832.39px;font-size:15.6px;line-height:15.6px;color:#2b2b2b;font-weight:normal;white-space:pre;font-family:'Liberation Sans',sans-serif;left:2235px;">5-12-2023</div>
<div style="position:absolute;left:234px;top:897px;width:2091px;height:1px;background:#d9d9d9"></div>
<div style="position:absolute;top:870.89px;font-size:15.6px;line-height:15.6px;color:#2b2b2b;font-weight:normal;white-space:pre;font-family:'Liberation Sans',sans-serif;left:245px;">5-16-2023</div>
<div style="position:absolute;top:870.89px;font-size:15.6px;line-height:15.6px;color:#2b2b2b;font-weight:normal;white-space:pre;font-family:'Liberation Sans',sans-serif;left:347px;">$49,123.62</div>
<div style="position:absolute;top:870.89px;font-size:15.6px;line-height:15.6px;color:#2b2b2b;font-weight:normal;white-space:pre;font-family:'Liberation Sans',sans-serif;left:448px;">$0.00</div>
<div style="position:absolute;top:870.89px;font-size:15.6px;line-height:15.6px;color:#2b2b2b;font-weight:normal;white-space:pre;font-family:'Liberation Sans',sans-serif;left:550px;">EARTH RETENTION SYSTEMS</div>
<div style="position:absolute;top:870.89px;font-size:15.6px;line-height:15.6px;color:#2b2b2b;font-weight:normal;white-space:pre;font-family:'Liberation Sans',sans-serif;left:855px;">Dollars Paid</div>
<div style="position:absolute;top:870.89px;font-size:15.6px;line-height:15.6px;color:#2b2b2b;font-weight:normal;white-space:pre;font-family:'Liberation Sans',sans-serif;left:1179px;">0</div>
<div style="position:absolute;top:870.89px;font-size:15.6px;line-height:15.6px;color:#2b2b2b;font-weight:normal;white-space:pre;font-family:'Liberation Sans',sans-serif;left:1505px;">1543</div>
<div style="position:absolute;top:870.89px;font-size:15.6px;line-height:15.6px;color:#2b2b2b;font-weight:normal;white-space:pre;font-family:'Liberation Sans',sans-serif;left:1606px;">79299</div>
<div style="position:absolute;top:870.89px;font-size:15.6px;line-height:15.6px;color:#2b2b2b;font-weight:normal;white-space:pre;font-family:'Liberation Sans',sans-serif;left:1707px;">Subcontract</div>
<div style="position:absolute;top:870.89px;font-size:15.6px;line-height:15.6px;color:#2b2b2b;font-weight:normal;white-space:pre;font-family:'Liberation Sans',sans-serif;left:1828px;">6</div>
<div style="position:absolute;top:870.89px;font-size:15.6px;line-height:15.6px;color:#2b2b2b;font-weight:normal;white-space:pre;font-family:'Liberation Sans',sans-serif;left:1930px;">AP</div>
<div style="position:absolute;top:870.89px;font-size:15.6px;line-height:15.6px;color:#2b2b2b;font-weight:normal;white-space:pre;font-family:'Liberation Sans',sans-serif;left:2134px;">15179</div>
<div style="position:absolute;top:870.89px;font-size:15.6px;line-height:15.6px;color:#2b2b2b;font-weight:normal;white-space:pre;font-family:'Liberation Sans',sans-serif;left:2235px;">5-16-2023</div>
<div style="position:absolute;left:234px;top:961px;width:2091px;height:1px;background:#d9d9d9"></div>
<div style="position:absolute;top:921.89px;font-size:15.6px;line-height:15.6px;color:#2b2b2b;font-weight:normal;white-space:pre;font-family:'Liberation Sans',sans-serif;left:245px;">6-30-2023</div>
<div style="position:absolute;top:921.89px;font-size:15.6px;line-height:15.6px;color:#2b2b2b;font-weight:normal;white-space:pre;font-family:'Liberation Sans',sans-serif;left:347px;">$50,811.86</div>
<div style="position:absolute;top:921.89px;font-size:15.6px;line-height:15.6px;color:#2b2b2b;font-weight:normal;white-space:pre;font-family:'Liberation Sans',sans-serif;left:448px;">$2,540.59</div>
<div style="position:absolute;top:921.89px;font-size:15.6px;line-height:15.6px;color:#2b2b2b;font-weight:normal;white-space:pre;font-family:'Liberation Sans',sans-serif;left:855px;">Amount Invoiced</div>
<div style="position:absolute;top:921.89px;font-size:15.6px;line-height:15.6px;color:#2b2b2b;font-weight:normal;white-space:pre;font-family:'Liberation Sans',sans-serif;left:1179px;">0</div>
<div style="position:absolute;top:921.89px;font-size:15.6px;line-height:15.6px;color:#2b2b2b;font-weight:normal;white-space:pre;font-family:'Liberation Sans',sans-serif;left:1505px;">1567</div>
<div style="position:absolute;top:921.89px;font-size:15.6px;line-height:15.6px;color:#2b2b2b;font-weight:normal;white-space:pre;font-family:'Liberation Sans',sans-serif;left:1606px;">1567</div>
<div style="position:absolute;top:921.89px;font-size:15.6px;line-height:15.6px;color:#2b2b2b;font-weight:normal;white-space:pre;font-family:'Liberation Sans',sans-serif;left:1707px;">Subcontract</div>
<div style="position:absolute;top:921.89px;font-size:15.6px;line-height:15.6px;color:#2b2b2b;font-weight:normal;white-space:pre;font-family:'Liberation Sans',sans-serif;left:1828px;">6</div>
<div style="position:absolute;top:921.89px;font-size:15.6px;line-height:15.6px;color:#2b2b2b;font-weight:normal;white-space:pre;font-family:'Liberation Sans',sans-serif;left:1930px;">AP</div>
<div style="position:absolute;top:909.39px;font-size:15.6px;line-height:15.6px;color:#2b2b2b;font-weight:normal;white-space:pre;font-family:'Liberation Sans',sans-serif;left:2033px;">01-01-</div>
<div style="position:absolute;top:934.39px;font-size:15.6px;line-height:15.6px;color:#2b2b2b;font-weight:normal;white-space:pre;font-family:'Liberation Sans',sans-serif;left:2033px;">50600</div>
<div style="position:absolute;top:921.89px;font-size:15.6px;line-height:15.6px;color:#2b2b2b;font-weight:normal;white-space:pre;font-family:'Liberation Sans',sans-serif;left:2134px;">15324</div>
<div style="position:absolute;top:921.89px;font-size:15.6px;line-height:15.6px;color:#2b2b2b;font-weight:normal;white-space:pre;font-family:'Liberation Sans',sans-serif;left:2235px;">7-6-2023</div>
<div style="position:absolute;left:234px;top:1025px;width:2091px;height:1px;background:#d9d9d9"></div>
<div style="position:absolute;top:985.89px;font-size:15.6px;line-height:15.6px;color:#2b2b2b;font-weight:normal;white-space:pre;font-family:'Liberation Sans',sans-serif;left:245px;">6-30-2023</div>
<div style="position:absolute;top:985.89px;font-size:15.6px;line-height:15.6px;color:#2b2b2b;font-weight:normal;white-space:pre;font-family:'Liberation Sans',sans-serif;left:347px;">$96,929.07</div>
<div style="position:absolute;top:985.89px;font-size:15.6px;line-height:15.6px;color:#2b2b2b;font-weight:normal;white-space:pre;font-family:'Liberation Sans',sans-serif;left:448px;">$4,846.45</div>
<div style="position:absolute;top:985.89px;font-size:15.6px;line-height:15.6px;color:#2b2b2b;font-weight:normal;white-space:pre;font-family:'Liberation Sans',sans-serif;left:855px;">Amount Invoiced</div>
<div style="position:absolute;top:985.89px;font-size:15.6px;line-height:15.6px;color:#2b2b2b;font-weight:normal;white-space:pre;font-family:'Liberation Sans',sans-serif;left:1179px;">0</div>
<div style="position:absolute;top:985.89px;font-size:15.6px;line-height:15.6px;color:#2b2b2b;font-weight:normal;white-space:pre;font-family:'Liberation Sans',sans-serif;left:1505px;">1554</div>
<div style="position:absolute;top:985.89px;font-size:15.6px;line-height:15.6px;color:#2b2b2b;font-weight:normal;white-space:pre;font-family:'Liberation Sans',sans-serif;left:1606px;">1554</div>
<div style="position:absolute;top:985.89px;font-size:15.6px;line-height:15.6px;color:#2b2b2b;font-weight:normal;white-space:pre;font-family:'Liberation Sans',sans-serif;left:1707px;">Subcontract</div>
<div style="position:absolute;top:985.89px;font-size:15.6px;line-height:15.6px;color:#2b2b2b;font-weight:normal;white-space:pre;font-family:'Liberation Sans',sans-serif;left:1828px;">6</div>
<div style="position:absolute;top:985.89px;font-size:15.6px;line-height:15.6px;color:#2b2b2b;font-weight:normal;white-space:pre;font-family:'Liberation Sans',sans-serif;left:1930px;">AP</div>
<div style="position:absolute;top:973.39px;font-size:15.6px;line-height:15.6px;color:#2b2b2b;font-weight:normal;white-space:pre;font-family:'Liberation Sans',sans-serif;left:2033px;">01-01-</div>
<div style="position:absolute;top:998.39px;font-size:15.6px;line-height:15.6px;color:#2b2b2b;font-weight:normal;white-space:pre;font-family:'Liberation Sans',sans-serif;left:2033px;">50600</div>
<div style="position:absolute;top:985.89px;font-size:15.6px;line-height:15.6px;color:#2b2b2b;font-weight:normal;white-space:pre;font-family:'Liberation Sans',sans-serif;left:2134px;">15343</div>
<div style="position:absolute;top:985.89px;font-size:15.6px;line-height:15.6px;color:#2b2b2b;font-weight:normal;white-space:pre;font-family:'Liberation Sans',sans-serif;left:2235px;">7-12-2023</div>
<div style="position:absolute;left:234px;top:1064px;width:2091px;height:1px;background:#d9d9d9"></div>
<div style="position:absolute;top:1037.39px;font-size:15.6px;line-height:15.6px;color:#2b2b2b;font-weight:normal;white-space:pre;font-family:'Liberation Sans',sans-serif;left:245px;">7-14-2023</div>
<div style="position:absolute;top:1037.39px;font-size:15.6px;line-height:15.6px;color:#2b2b2b;font-weight:normal;white-space:pre;font-family:'Liberation Sans',sans-serif;left:347px;">$92,082.62</div>
<div style="position:absolute;top:1037.39px;font-size:15.6px;line-height:15.6px;color:#2b2b2b;font-weight:normal;white-space:pre;font-family:'Liberation Sans',sans-serif;left:448px;">$0.00</div>
<div style="position:absolute;top:1037.39px;font-size:15.6px;line-height:15.6px;color:#2b2b2b;font-weight:normal;white-space:pre;font-family:'Liberation Sans',sans-serif;left:550px;">EARTH RETENTION SYSTEMS</div>
<div style="position:absolute;top:1037.39px;font-size:15.6px;line-height:15.6px;color:#2b2b2b;font-weight:normal;white-space:pre;font-family:'Liberation Sans',sans-serif;left:855px;">Dollars Paid</div>
<div style="position:absolute;top:1037.39px;font-size:15.6px;line-height:15.6px;color:#2b2b2b;font-weight:normal;white-space:pre;font-family:'Liberation Sans',sans-serif;left:1179px;">0</div>
<div style="position:absolute;top:1037.39px;font-size:15.6px;line-height:15.6px;color:#2b2b2b;font-weight:normal;white-space:pre;font-family:'Liberation Sans',sans-serif;left:1505px;">1554</div>
<div style="position:absolute;top:1037.39px;font-size:15.6px;line-height:15.6px;color:#2b2b2b;font-weight:normal;white-space:pre;font-family:'Liberation Sans',sans-serif;left:1606px;">79727</div>
<div style="position:absolute;top:1037.39px;font-size:15.6px;line-height:15.6px;color:#2b2b2b;font-weight:normal;white-space:pre;font-family:'Liberation Sans',sans-serif;left:1707px;">Subcontract</div>
<div style="position:absolute;top:1037.39px;font-size:15.6px;line-height:15.6px;color:#2b2b2b;font-weight:normal;white-space:pre;font-family:'Liberation Sans',sans-serif;left:1828px;">6</div>
<div style="position:absolute;top:1037.39px;font-size:15.6px;line-height:15.6px;color:#2b2b2b;font-weight:normal;white-space:pre;font-family:'Liberation Sans',sans-serif;left:1930px;">AP</div>
<div style="position:absolute;top:1037.39px;font-size:15.6px;line-height:15.6px;color:#2b2b2b;font-weight:normal;white-space:pre;font-family:'Liberation Sans',sans-serif;left:2134px;">15350</div>
<div style="position:absolute;top:1037.39px;font-size:15.6px;line-height:15.6px;color:#2b2b2b;font-weight:normal;white-space:pre;font-family:'Liberation Sans',sans-serif;left:2235px;">7-14-2023</div>
<div style="position:absolute;left:234px;top:1104px;width:2091px;height:1px;background:#d9d9d9"></div>
<div style="position:absolute;top:1076.89px;font-size:15.6px;line-height:15.6px;color:#2b2b2b;font-weight:normal;white-space:pre;font-family:'Liberation Sans',sans-serif;left:245px;">8-11-2023</div>
<div style="position:absolute;top:1076.89px;font-size:15.6px;line-height:15.6px;color:#2b2b2b;font-weight:normal;white-space:pre;font-family:'Liberation Sans',sans-serif;left:347px;">$48,271.27</div>
<div style="position:absolute;top:1076.89px;font-size:15.6px;line-height:15.6px;color:#2b2b2b;font-weight:normal;white-space:pre;font-family:'Liberation Sans',sans-serif;left:448px;">$0.00</div>
<div style="position:absolute;top:1076.89px;font-size:15.6px;line-height:15.6px;color:#2b2b2b;font-weight:normal;white-space:pre;font-family:'Liberation Sans',sans-serif;left:550px;">EARTH RETENTION SYSTEMS</div>
<div style="position:absolute;top:1076.89px;font-size:15.6px;line-height:15.6px;color:#2b2b2b;font-weight:normal;white-space:pre;font-family:'Liberation Sans',sans-serif;left:855px;">Dollars Paid</div>
<div style="position:absolute;top:1076.89px;font-size:15.6px;line-height:15.6px;color:#2b2b2b;font-weight:normal;white-space:pre;font-family:'Liberation Sans',sans-serif;left:1179px;">0</div>
<div style="position:absolute;top:1076.89px;font-size:15.6px;line-height:15.6px;color:#2b2b2b;font-weight:normal;white-space:pre;font-family:'Liberation Sans',sans-serif;left:1505px;">1567</div>
<div style="position:absolute;top:1076.89px;font-size:15.6px;line-height:15.6px;color:#2b2b2b;font-weight:normal;white-space:pre;font-family:'Liberation Sans',sans-serif;left:1606px;">79975</div>
<div style="position:absolute;top:1076.89px;font-size:15.6px;line-height:15.6px;color:#2b2b2b;font-weight:normal;white-space:pre;font-family:'Liberation Sans',sans-serif;left:1707px;">Subcontract</div>
<div style="position:absolute;top:1076.89px;font-size:15.6px;line-height:15.6px;color:#2b2b2b;font-weight:normal;white-space:pre;font-family:'Liberation Sans',sans-serif;left:1828px;">6</div>
<div style="position:absolute;top:1076.89px;font-size:15.6px;line-height:15.6px;color:#2b2b2b;font-weight:normal;white-space:pre;font-family:'Liberation Sans',sans-serif;left:1930px;">AP</div>
<div style="position:absolute;top:1076.89px;font-size:15.6px;line-height:15.6px;color:#2b2b2b;font-weight:normal;white-space:pre;font-family:'Liberation Sans',sans-serif;left:2134px;">15444</div>
<div style="position:absolute;top:1076.89px;font-size:15.6px;line-height:15.6px;color:#2b2b2b;font-weight:normal;white-space:pre;font-family:'Liberation Sans',sans-serif;left:2235px;">8-11-2023</div>
<svg style="position:absolute;left:1536px;top:602px" width="16" height="25" viewBox="0 0 16 25"><path d="M1 1 V19 L5.5 15 L9 23 L12 21.5 L8.5 14 H14 Z" fill="#fff" stroke="#111" stroke-width="1.3" stroke-linejoin="round"/></svg>
</body></html>
